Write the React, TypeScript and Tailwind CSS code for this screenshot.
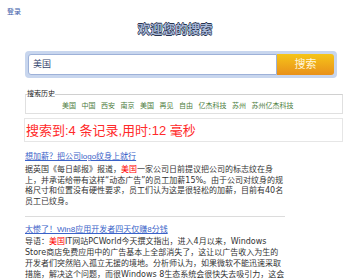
import React from 'react'

const history = ['美国', '中国', '西安', '南京', '美国', '再见', '自由', '亿杰科技', '苏州', '苏州亿杰科技']

const font = "font-['Liberation_Sans','Noto_Sans_CJK_SC',sans-serif]"
const bodyFont = "font-['DejaVu_Sans','Noto_Sans_CJK_SC',sans-serif]"

const Hl = ({ children }: { children: React.ReactNode }) => (
  <span className="text-[#ff0000]">{children}</span>
)

export default function App() {
  return (
    <div className={`${font} w-[350px] h-[280px] overflow-hidden bg-white text-[#333]`}>
      <div className="h-[19px] pl-[7px] pt-[8px]">
        <a className="block text-[7px] leading-[8px] text-[#3b5ba8]">登录</a>
      </div>
      <h1 className="mt-[4px] text-center text-[12.5px] leading-[14px] font-bold text-[#a9b9d8] [text-shadow:-0.6px_0_#27324d,0.6px_0_#27324d,0_-0.6px_#27324d,0_0.6px_#27324d]">
        欢迎您的搜索
      </h1>

      <div className="ml-[25px] mt-[14px] w-[312px] h-[27px] rounded-[4px] bg-[#c8d6ee] p-[3px]">
        <div className="flex h-full">
          <div className="flex-1 bg-white border border-[#9db1d8] rounded-l-[3px] flex items-center pl-[4px] text-[9px] text-[#34466e]">
            美国
          </div>
          <button className="w-[57px] rounded-r-[3px] bg-gradient-to-b from-[#f5c518] to-[#e8901a] text-[11px] leading-none text-[#fff6dc]">
            搜索
          </button>
        </div>
      </div>

      <fieldset className="ml-[25px] mt-[12px] w-[318px] h-[24px] border border-[#e0e0e0] border-t-[#d0d0d0] px-0">
        <legend className="text-[7px] leading-[8px] text-[#222] ml-[1px] px-0">搜索历史</legend>
        <div className="flex gap-[5.5px] pl-[36px] pt-[4px] text-[7px] leading-[8px] text-[#4c7c3c]">
          {history.map((h, i) => (
            <a key={i}>{h}</a>
          ))}
        </div>
      </fieldset>

      <div className="ml-[24px] mt-[4px] w-[319px] h-[24px] border border-[#e6e6e6] flex items-center pl-[1px] text-[13px] leading-none text-[#ff2a2a]">
        搜索到:4 条记录,用时:12 毫秒
      </div>

      <div className={`${bodyFont} ml-[25px] w-[260px] mt-[10px]`}>
        <a className={`${font} block text-[8px] leading-[10px] text-[#3a62c8] underline`}>想加薪？把公司logo纹身上就行</a>
        <p className="mt-[3px] text-[8px] leading-[10.7px] text-[#333]">
          据英国《每日邮报》报道，<Hl>美国</Hl>一家公司日前提议把公司的标志纹在身上，并承诺给带有这样“动态广告”的员工加薪15%。由于公司对纹身的规格尺寸和位置没有硬性要求，员工们认为这是很轻松的加薪，目前有40名员工已纹身。
        </p>
        <div className="mt-[8px] border-t border-[#dcdcdc]" />
        <a className={`${font} block mt-[8px] text-[8px] leading-[10px] text-[#3a62c8] underline`}>太惨了！Win8应用开发者四天仅赚8分钱</a>
        <p className="mt-[1px] text-[8px] leading-[11px] text-[#333]">
          导语：<Hl>美国</Hl>IT网站PCWorld今天撰文指出，进入4月以来，Windows Store商店免费应用中的广告基本上全部消失了，这让以广告收入为生的开发者们突然陷入孤立无援的境地。分析师认为，如果微软不能迅速采取措施，解决这个问题，而很Windows 8生态系统会很快失去吸引力，这会
        </p>
      </div>
    </div>
  )
}
